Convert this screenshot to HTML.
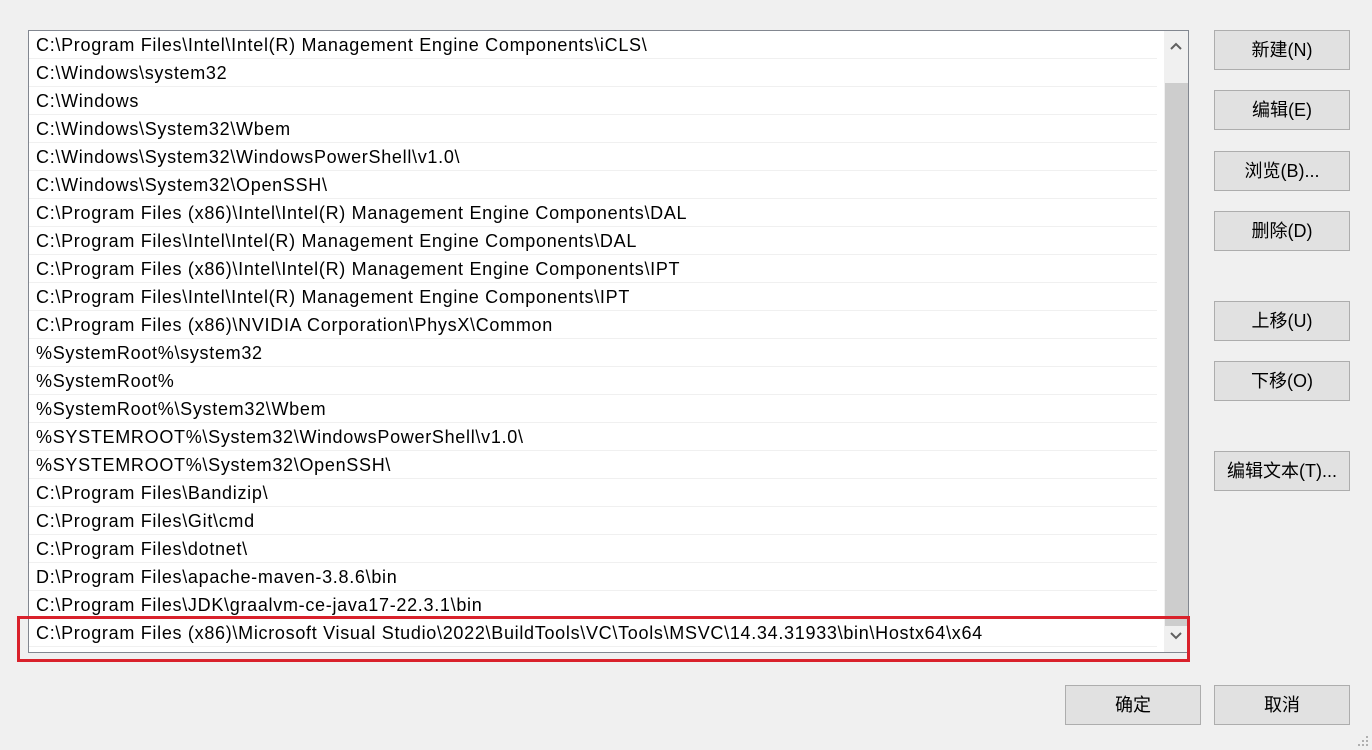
<!DOCTYPE html>
<html><head><meta charset="utf-8"><style>
html,body{margin:0;padding:0;width:1372px;height:750px;background:#f0f0f0;overflow:hidden;font-family:"Liberation Sans","Noto Sans CJK SC",sans-serif;color:#000}
#list{position:absolute;left:28px;top:30px;width:1161px;height:623px;border:1px solid #828790;background:#fff;box-sizing:border-box;overflow:hidden}
.row{height:28px;line-height:29px;border-bottom:1px solid #f0f0f0;padding-left:7px;font-size:18px;letter-spacing:0.7px;white-space:nowrap;width:1128px;box-sizing:border-box}
#sb{position:absolute;left:1135px;top:0;width:24px;height:621px;background:#f0f0f0}
#thumb{position:absolute;left:1px;top:52px;width:23px;height:543px;background:#cdcdcd}
.btn{position:absolute;width:136px;height:40px;background:#e1e1e1;border:1px solid #adadad;box-sizing:border-box;text-align:center;line-height:38px;font-size:18px}
#red{position:absolute;left:17px;top:616px;width:1173px;height:46px;border:3px solid #d9212b;box-sizing:border-box}
</style></head><body>
<div id="list">
<div class="row">C:\Program Files\Intel\Intel(R) Management Engine Components\iCLS\</div>
<div class="row">C:\Windows\system32</div>
<div class="row">C:\Windows</div>
<div class="row">C:\Windows\System32\Wbem</div>
<div class="row">C:\Windows\System32\WindowsPowerShell\v1.0\</div>
<div class="row">C:\Windows\System32\OpenSSH\</div>
<div class="row">C:\Program Files (x86)\Intel\Intel(R) Management Engine Components\DAL</div>
<div class="row">C:\Program Files\Intel\Intel(R) Management Engine Components\DAL</div>
<div class="row">C:\Program Files (x86)\Intel\Intel(R) Management Engine Components\IPT</div>
<div class="row">C:\Program Files\Intel\Intel(R) Management Engine Components\IPT</div>
<div class="row">C:\Program Files (x86)\NVIDIA Corporation\PhysX\Common</div>
<div class="row">%SystemRoot%\system32</div>
<div class="row">%SystemRoot%</div>
<div class="row">%SystemRoot%\System32\Wbem</div>
<div class="row">%SYSTEMROOT%\System32\WindowsPowerShell\v1.0\</div>
<div class="row">%SYSTEMROOT%\System32\OpenSSH\</div>
<div class="row">C:\Program Files\Bandizip\</div>
<div class="row">C:\Program Files\Git\cmd</div>
<div class="row">C:\Program Files\dotnet\</div>
<div class="row">D:\Program Files\apache-maven-3.8.6\bin</div>
<div class="row">C:\Program Files\JDK\graalvm-ce-java17-22.3.1\bin</div>
<div class="row">C:\Program Files (x86)\Microsoft Visual Studio\2022\BuildTools\VC\Tools\MSVC\14.34.31933\bin\Hostx64\x64</div>
<div id="sb"><div id="thumb"></div>
<svg style="position:absolute;left:6px;top:11px" width="12" height="8"><path d="M1 7 L6 2 L11 7" stroke="#606060" stroke-width="2" fill="none"/></svg>
<svg style="position:absolute;left:6px;top:601px" width="12" height="8"><path d="M1 1 L6 6 L11 1" stroke="#606060" stroke-width="2" fill="none"/></svg>
</div>
</div>
<div id="red"></div>
<div class="btn" style="left:1214px;top:30px">新建(N)</div>
<div class="btn" style="left:1214px;top:90px">编辑(E)</div>
<div class="btn" style="left:1214px;top:151px">浏览(B)...</div>
<div class="btn" style="left:1214px;top:211px">删除(D)</div>
<div class="btn" style="left:1214px;top:301px">上移(U)</div>
<div class="btn" style="left:1214px;top:361px">下移(O)</div>
<div class="btn" style="left:1214px;top:451px">编辑文本(T)...</div>
<div class="btn" style="left:1065px;top:685px">确定</div>
<div class="btn" style="left:1214px;top:685px">取消</div>
<svg style="position:absolute;left:1358px;top:736px" width="12" height="12" fill="#b0b0b0"><rect x="8" y="0" width="2" height="2"/><rect x="4" y="4" width="2" height="2"/><rect x="8" y="4" width="2" height="2"/><rect x="0" y="8" width="2" height="2"/><rect x="4" y="8" width="2" height="2"/><rect x="8" y="8" width="2" height="2"/></svg>
</body></html>
